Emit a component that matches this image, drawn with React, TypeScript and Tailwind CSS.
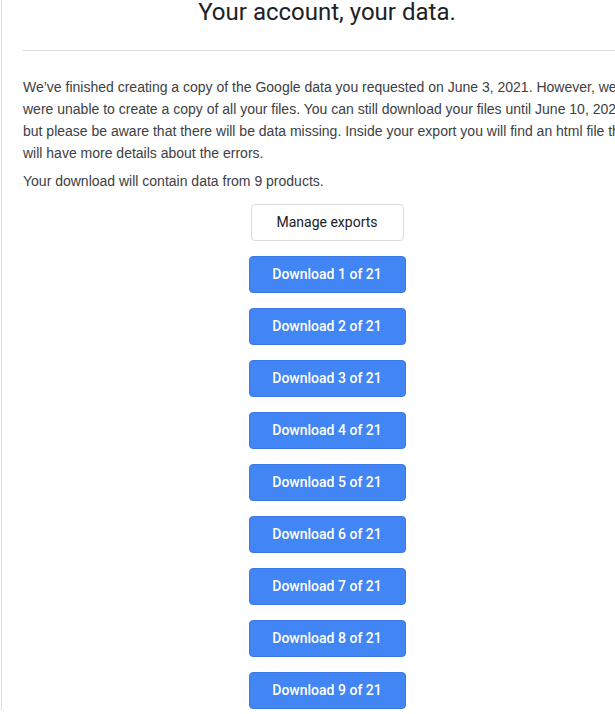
import React from "react";

const parts = Array.from({ length: 9 }, (_, i) => i + 1);

export default function App() {
  return (
    <div className="w-[615px] h-[714px] overflow-hidden bg-white">
      <div className="w-[651px] min-h-[714px] border-l border-[#dadce0] ml-px px-[21px]">
        <h1 className="-mt-[4px] text-center text-[24px] leading-[32px] font-normal text-[#202124] font-['Roboto',sans-serif]">
          Your account, your data.
        </h1>
        <div className="mt-[22px] border-t border-[#dadce0]" />

        <div className="mt-[25px] -mr-[10px] text-[14px] leading-[22px] text-[#3c4043] font-['Liberation_Sans',Arial,sans-serif]">
          <p>
            We’ve finished creating a copy of the Google data you requested on June 3, 2021. However, we were unable to create a copy of all your files. You can still download your files until June 10, 2021, but please be aware that there will be data missing. Inside your export you will find an html file that will have more details about the errors.
          </p>
          <p className="mt-[6px]">Your download will contain data from 9 products.</p>
        </div>

        <div className="mt-[12px] flex flex-col items-center gap-[15px] font-['Roboto',sans-serif] text-[14px]">
          <button className="w-[153px] h-[37px] rounded-[4px] border border-[#dadce0] bg-white text-[#202124]">
            Manage exports
          </button>
          {parts.map((n) => (
            <button
              key={n}
              className="w-[157px] h-[37px] rounded-[4px] border border-[#3b78e7] bg-[#4285f4] text-white font-medium"
            >
              Download {n} of 21
            </button>
          ))}
        </div>
      </div>
    </div>
  );
}
